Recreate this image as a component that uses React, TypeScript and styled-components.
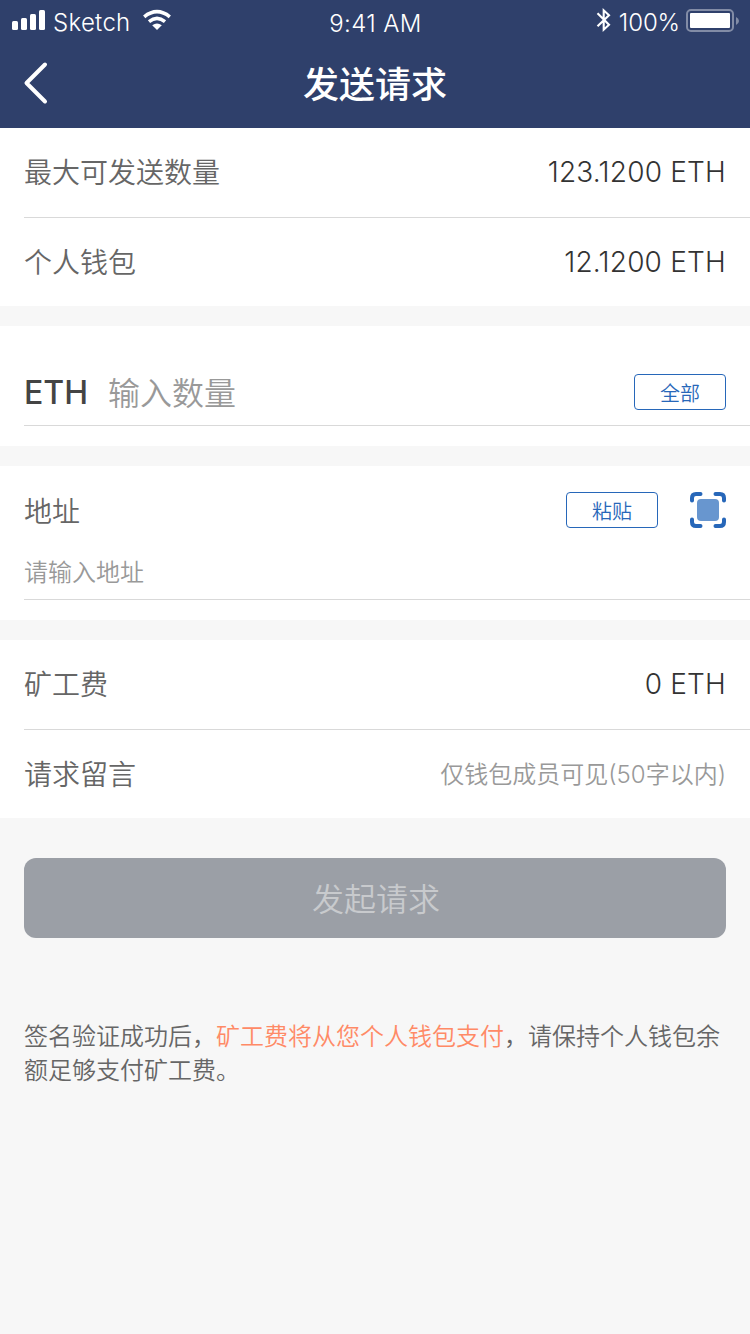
import React from 'react';
import styled, { createGlobalStyle } from 'styled-components';

const GlobalStyle = createGlobalStyle`
  * { box-sizing: border-box; }
  body {
    margin: 0;
    background: #f7f7f7;
    font-family: Inter, "Noto Sans CJK SC", sans-serif;
    font-weight: 350;
    color: #666;
  }
`;

const Screen = styled.div`
  width: 750px;
  min-height: 1334px;
  background: #f7f7f7;
`;

const Header = styled.header`
  height: 128px;
  background: #2f406b;
  color: #fff;
`;

const StatusBar = styled.div`
  display: grid;
  grid-template-columns: 1fr auto 1fr;
  height: 40px;
  padding: 0 11px 0 12px;
  font-size: 24px;
  line-height: 46px;
`;

const StatusGroup = styled.div<{ $end?: boolean }>`
  display: flex;
  align-items: flex-start;
  justify-content: ${(p) => (p.$end ? 'flex-end' : 'flex-start')};
  svg { display: block; flex: none; }
`;

const Carrier = styled.span`
  margin: 0 11px 0 7px;
  letter-spacing: 0.3px;
`;

const Clock = styled.span`
  line-height: 48px;
  letter-spacing: 0.4px;
`;

const Charge = styled.span`
  margin: 0 6px 0 7px;
  letter-spacing: -0.1px;
`;

const NavBar = styled.div`
  display: grid;
  grid-template-columns: 100px 1fr 100px;
  height: 88px;
  align-items: center;
`;

const BackButton = styled.button`
  display: flex;
  padding: 0 0 2px 23px;
  border: 0;
  background: none;
`;

const Title = styled.h1`
  margin: 0;
  font-size: 36px;
  font-weight: 500;
  font-family: "Noto Sans CJK SC", sans-serif;
  line-height: 50px;
  padding-bottom: 4px;
  text-align: center;
`;

const Panel = styled.section`
  margin-bottom: 20px;
  padding-left: 24px;
  background: #fff;
`;

const Row = styled.div<{ $line?: boolean }>`
  display: flex;
  align-items: center;
  justify-content: space-between;
  height: ${(p) => (p.$line ? 90 : 88)}px;
  padding-top: ${(p) => (p.$line ? 0 : 1)}px;
  padding-right: 24px;
  border-bottom: ${(p) => (p.$line ? '1px solid #d9d9d9' : '0')};
`;

const Label = styled.span`
  font-size: 28px;
  line-height: 40px;
`;

const Value = styled.span`
  padding-bottom: 1px;
  font-size: 28px;
  line-height: 40px;
  letter-spacing: 0.2px;
  color: #333;
`;

const Hint = styled.span`
  font-size: 24px;
  line-height: 34px;
  color: #999;
`;

const AmountPanel = styled(Panel)`
  height: 120px;
`;

const AmountField = styled.div`
  display: flex;
  align-items: center;
  height: 100px;
  padding: 33px 24px 0 0;
  border-bottom: 1px solid #d9d9d9;
`;

const Unit = styled.span`
  width: 84px;
  padding-top: 1px;
  font-size: 32px;
  font-weight: 500;
  color: #444;
`;

const AmountHint = styled.span`
  flex: 1;
  padding-bottom: 2px;
  font-size: 32px;
  color: #999;
`;

const SmallButton = styled.button`
  width: 92px;
  height: 36px;
  padding: 2px 0 0;
  border: 1px solid #2767b9;
  border-radius: 4px;
  background: #fff;
  color: #2767b9;
  font: inherit;
  font-size: 20px;
  line-height: 34px;
`;

const AddressPanel = styled(Panel)`
  height: 154px;
`;

const AddressField = styled.div`
  height: 134px;
  border-bottom: 1px solid #d9d9d9;
`;

const AddressHead = styled.div`
  display: flex;
  align-items: center;
  justify-content: space-between;
  height: 88px;
  margin-bottom: 2px;
  padding-right: 24px;
  ${Label} { padding-top: 3px; }
`;

const Actions = styled.div`
  display: flex;
  gap: 32px;
`;

const Submit = styled.button`
  display: block;
  width: 702px;
  height: 80px;
  margin: 40px 24px 82px;
  padding: 0 0 2px 2px;
  border: 0;
  border-radius: 12px;
  background: #9b9fa6;
  color: #c8cacd;
  font: inherit;
  font-size: 32px;
`;

const Notice = styled.p`
  margin: 0 24px;
  font-size: 24px;
  line-height: 34px;
`;

const Warning = styled.span`
  color: #ff8a66;
`;

const SignalIcon = () => (
  <svg width="34" height="40" fill="#fff">
    <rect x="0" y="21" width="6" height="9" rx="1.5" />
    <rect x="9" y="18" width="6" height="12" rx="1.5" />
    <rect x="18" y="14" width="6" height="16" rx="1.5" />
    <rect x="27" y="10" width="6" height="20" rx="1.5" />
  </svg>
);

const WifiIcon = () => (
  <svg width="30" height="40" viewBox="0 0 30 40" fill="none" stroke="#fff" strokeWidth="3.6">
    <path d="M2.2 16.8Q15 6.6 27.8 16.8" />
    <path d="M7 21.6Q15 15.2 23 21.6" />
    <path d="M10.2 25.2Q15 21.8 19.8 25.2L15 30Z" fill="#fff" stroke="none" />
  </svg>
);

const BluetoothIcon = () => (
  <svg width="16" height="40" viewBox="0 0 16 40" fill="none" stroke="#fff" strokeWidth="2.1">
    <path d="M1.5 13.2L13 24.8L7.7 29.7V10.3L13 15.2L1.5 26.2" />
  </svg>
);

const BatteryIcon = () => (
  <svg width="53" height="40" viewBox="0 0 53 40">
    <rect x="1" y="10" width="46" height="21" rx="4" fill="none" stroke="#828ca6" strokeWidth="2" />
    <rect x="4" y="13" width="40" height="15" rx="1" fill="#fff" />
    <path d="M50 17Q53 18.5 53 21T50 25Z" fill="#828ca6" />
  </svg>
);

const BackIcon = () => (
  <svg width="26" height="44" viewBox="0 0 26 44" fill="none" stroke="#fff" strokeWidth="4" strokeLinecap="round" strokeLinejoin="round">
    <path d="M22 3.5L3.5 22L22 40.5" />
  </svg>
);

const ScanIcon = () => (
  <svg width="36" height="36" viewBox="0 0 36 36">
    <rect x="7" y="7" width="22" height="22" rx="4" fill="#6896cf" />
    <path
      d="M2 8.5V6Q2 2 6 2H10.5M25.5 2H30Q34 2 34 6V8.5M34 27.5V30Q34 34 30 34H25.5M10.5 34H6Q2 34 2 30V27.5"
      fill="none"
      stroke="#2767b9"
      strokeWidth="4"
      strokeLinecap="round"
    />
  </svg>
);

export default function App() {
  return (
    <Screen>
      <GlobalStyle />
      <Header>
        <StatusBar>
          <StatusGroup>
            <SignalIcon />
            <Carrier>Sketch</Carrier>
            <WifiIcon />
          </StatusGroup>
          <Clock>9:41 AM</Clock>
          <StatusGroup $end>
            <BluetoothIcon />
            <Charge>100%</Charge>
            <BatteryIcon />
          </StatusGroup>
        </StatusBar>
        <NavBar>
          <BackButton aria-label="返回">
            <BackIcon />
          </BackButton>
          <Title>发送请求</Title>
        </NavBar>
      </Header>
      <Panel>
        <Row $line>
          <Label>最大可发送数量</Label>
          <Value>123.1200 ETH</Value>
        </Row>
        <Row>
          <Label>个人钱包</Label>
          <Value>12.1200 ETH</Value>
        </Row>
      </Panel>
      <AmountPanel>
        <AmountField>
          <Unit>ETH</Unit>
          <AmountHint>输入数量</AmountHint>
          <SmallButton>全部</SmallButton>
        </AmountField>
      </AmountPanel>
      <AddressPanel>
        <AddressField>
          <AddressHead>
            <Label>地址</Label>
            <Actions>
              <SmallButton>粘贴</SmallButton>
              <ScanIcon />
            </Actions>
          </AddressHead>
          <Hint>请输入地址</Hint>
        </AddressField>
      </AddressPanel>
      <Panel>
        <Row $line>
          <Label>矿工费</Label>
          <Value>0 ETH</Value>
        </Row>
        <Row>
          <Label>请求留言</Label>
          <Hint>仅钱包成员可见(50字以内)</Hint>
        </Row>
      </Panel>
      <Submit>发起请求</Submit>
      <Notice>
        签名验证成功后，<Warning>矿工费将从您个人钱包支付</Warning>，请保持个人钱包余额足够支付矿工费。
      </Notice>
    </Screen>
  );
}
